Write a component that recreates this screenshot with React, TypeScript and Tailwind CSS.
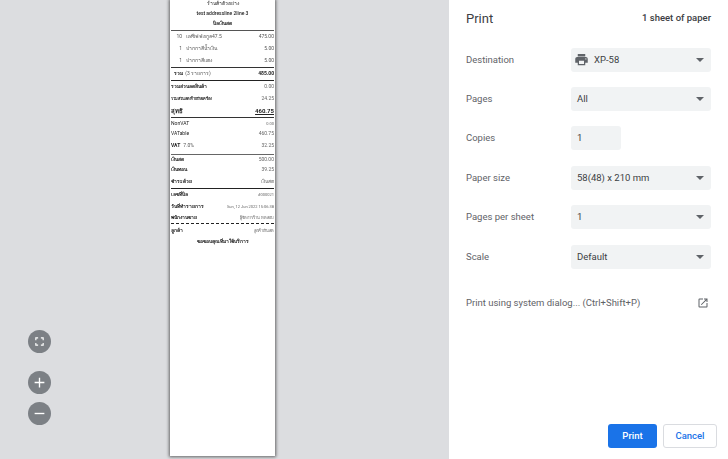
import { ReactNode } from "react";

const thai = "font-['Roboto','Noto_Sans','DejaVu_Sans',sans-serif]";

const settings = [
  { id: "destination", label: "Destination", value: "XP-58", printer: true },
  { id: "pages", label: "Pages", value: "All" },
  { id: "copies", label: "Copies", value: "1", input: true },
  { id: "paper", label: "Paper size", value: "58(48) x 210 mm" },
  { id: "sheet", label: "Pages per sheet", value: "1" },
  { id: "scale", label: "Scale", value: "Default" },
];

const Rule = ({ className = "border-[#333]" }: { className?: string }) => (
  <div className={`border-t ${className}`} />
);

const Row = ({
  left,
  right,
  h = "h-[11px]",
  bold = true,
  rightClass = "text-[5px] text-[#666]",
}: {
  left: ReactNode;
  right: ReactNode;
  h?: string;
  bold?: boolean;
  rightClass?: string;
}) => (
  <div className={`flex items-center justify-between ${h}`}>
    <span className={`text-[5px] text-[#222] ${bold ? "font-bold" : ""}`}>{left}</span>
    <span className={rightClass}>{right}</span>
  </div>
);

const Item = ({ qty, name, price }: { qty: string; name: string; price: string }) => (
  <div className="flex h-[12px] items-center text-[5px] text-[#555]">
    <span className="w-[11px] text-right">{qty}</span>
    <span className="ml-[4px] flex-1">{name}</span>
    <span>{price}</span>
  </div>
);

const Receipt = () => (
  <div className="h-[456px] w-[105px] bg-white shadow-[0_0_3px_1px_rgba(0,0,0,0.55)]">
    <div className={`flex h-full flex-col px-[1px] blur-[0.3px] ${thai}`}>
      <div className="flex h-[30px] flex-col items-center justify-between pb-[3px] text-[5px] font-medium text-[#222]">
        <span>ร้านค้าตัวอย่าง</span>
        <span>test addressline 2line 3</span>
        <span className="font-bold">บิลเงินสด</span>
      </div>
      <Rule className="border-[#555]" />
      <div>
        <Item qty="10" name="แท่ซิฟฟ่อกูล47.5" price="475.00" />
        <Item qty="1" name="ปากกาสีน้ำเงิน" price="5.00" />
        <Item qty="1" name="ปากกาสีแดง" price="5.00" />
      </div>
      <Rule />
      <div className="flex h-[12px] items-center justify-between pl-[3px] text-[5px] text-[#222]">
        <span>
          <span className="font-bold">รวม</span> <span className="ml-[1px] text-[#555]">(3 รายการ)</span>
        </span>
        <span className="font-bold">485.00</span>
      </div>
      <Rule className="border-[#222]" />
      <Row left="รวมส่วนลดสินค้า" right="0.00" h="h-[12px]" />
      <Row left={<span className="text-[4px]">รวมส่วนลดท้ายบิลเครื่อง</span>} right="24.25" h="h-[11px]" />
      <Row
        left={<span className="text-[6px]">สุทธิ</span>}
        right="460.75"
        h="h-[13px]"
        rightClass="text-[6px] font-bold text-[#222] underline"
      />
      <Rule className="border-[#333]" />
      <Row left="NonVAT" right={<span className="text-[4px]">0.00</span>} h="h-[11px]" bold={false} />
      <Row left="VATable" right="460.75" h="h-[10px]" bold={false} />
      <Row
        left={
          <>
            VAT <span className="ml-[2px] font-normal text-[#555]">7.0%</span>
          </>
        }
        right="32.25"
        h="h-[13px]"
      />
      <Rule className="mt-[2px] border-[#666]" />
      <Row left="เงินสด" right="500.00" h="h-[9px]" />
      <Row left="เงินทอน" right="39.25" h="h-[11px]" />
      <Row left="ชำระด้วย" right="เงินสด" h="h-[13px]" />
      <Rule className="border-[#222]" />
      <Row left="เลขที่บิล" right={<span className="text-[4px]">#000021</span>} h="h-[12px]" />
      <Row left="วันที่ทำรายการ" right={<span className="text-[4px]">Sun, 12 Jun 2022 15:06:38</span>} h="h-[11px]" />
      <Row left="พนักงานขาย" right={<span className="text-[4px]">ผู้จัดการร้าน ทดสอบ</span>} h="h-[11px]" />
      <div className="border-t border-dashed border-[#222]" />
      <Row left="ลูกค้า" right={<span className="text-[4px]">ลูกค้าเงินสด</span>} h="h-[13px]" />
      <div className="mt-[1px] text-center text-[5px] font-bold text-[#222]">ขอขอบคุณที่มาใช้บริการ</div>
    </div>
  </div>
);

const Chevron = () => (
  <svg width="8" height="4" viewBox="0 0 8 4" className="ml-auto">
    <path d="M0 0h8L4 4z" fill="#5f6368" />
  </svg>
);

const ZoomButton = ({ className, children }: { className: string; children: ReactNode }) => (
  <button
    type="button"
    className={`flex h-[23px] w-[23px] items-center justify-center rounded-full bg-[#7c8085] ${className}`}
  >
    {children}
  </button>
);

export default function App() {
  return (
    <div className="flex h-[459px] w-[728px] overflow-hidden bg-white font-['Roboto',sans-serif]">
      <div className="relative flex h-full w-[449px] justify-start bg-[#dcdde0] pl-[170px]">
        <Receipt />
        <div className="absolute left-[28px] top-[330px] flex flex-col">
          <ZoomButton className="">
            <svg width="11" height="11" viewBox="0 0 24 24" fill="none" stroke="#fff" strokeWidth="2.5">
              <path d="M4 9V4h5M15 4h5v5M20 15v5h-5M9 20H4v-5" />
            </svg>
          </ZoomButton>
          <ZoomButton className="mt-[18px]">
            <svg width="13" height="13" viewBox="0 0 24 24" fill="none" stroke="#fff" strokeWidth="2.5">
              <path d="M12 3v18M3 12h18" />
            </svg>
          </ZoomButton>
          <ZoomButton className="mt-[8px]">
            <svg width="13" height="13" viewBox="0 0 24 24" fill="none" stroke="#fff" strokeWidth="2.5">
              <path d="M3 12h18" />
            </svg>
          </ZoomButton>
        </div>
      </div>

      <div className="flex h-full flex-1 flex-col pl-[17px]">
        <div className="flex h-[37px] items-center justify-between pr-[17px]">
          <span className="text-[13px] text-[#3c4043]">Print</span>
          <span className="text-[9.5px] font-medium text-[#3c4043]">1 sheet of paper</span>
        </div>
        <div className="flex flex-col pr-[17px] pt-[3px]">
          {settings.map((s) => (
            <div key={s.id} className="flex h-[39.4px] items-center">
              <span className="w-[105px] text-[9.5px] text-[#5f6368]">{s.label}</span>
              <div
                className={`flex h-[24px] items-center rounded-[3px] bg-[#f1f3f4] pl-[6px] pr-[7px] text-[9.5px] text-[#3c4043] ${
                  s.input ? "w-[50px]" : "w-[140px]"
                }`}
              >
                {s.printer && (
                  <svg width="15" height="15" viewBox="0 0 24 24" fill="#5f6368" className="mr-[5px] -ml-[3px]">
                    <path d="M19 8H5c-1.66 0-3 1.34-3 3v6h4v4h12v-4h4v-6c0-1.66-1.34-3-3-3zm-3 11H8v-5h8v5zm3-7c-.55 0-1-.45-1-1s.45-1 1-1 1 .45 1 1-.45 1-1 1zm-1-9H6v4h12V3z" />
                  </svg>
                )}
                <span>{s.value}</span>
                {!s.input && <Chevron />}
              </div>
            </div>
          ))}
        </div>
        <div className="mt-[20px] flex items-center justify-between pr-[19px] text-[9.5px] text-[#5f6368]">
          <span>Print using system dialog... (Ctrl+Shift+P)</span>
          <svg width="12" height="12" viewBox="0 0 24 24" fill="#5f6368">
            <path d="M19 19H5V5h7V3H5a2 2 0 0 0-2 2v14a2 2 0 0 0 2 2h14c1.1 0 2-.9 2-2v-7h-2v7zM14 3v2h3.59l-9.83 9.83 1.41 1.41L19 6.41V10h2V3h-7z" />
          </svg>
        </div>
        <div className="mt-auto flex justify-end gap-[6px] pb-[11px] pr-[11px]">
          <button type="button" className="h-[24px] w-[49px] rounded-[3px] bg-[#1a73e8] text-[9.5px] font-medium text-white">
            Print
          </button>
          <button
            type="button"
            className="h-[24px] w-[54px] rounded-[3px] border border-[#dadce0] bg-white text-[9.5px] font-medium text-[#1a73e8]"
          >
            Cancel
          </button>
        </div>
      </div>
    </div>
  );
}
